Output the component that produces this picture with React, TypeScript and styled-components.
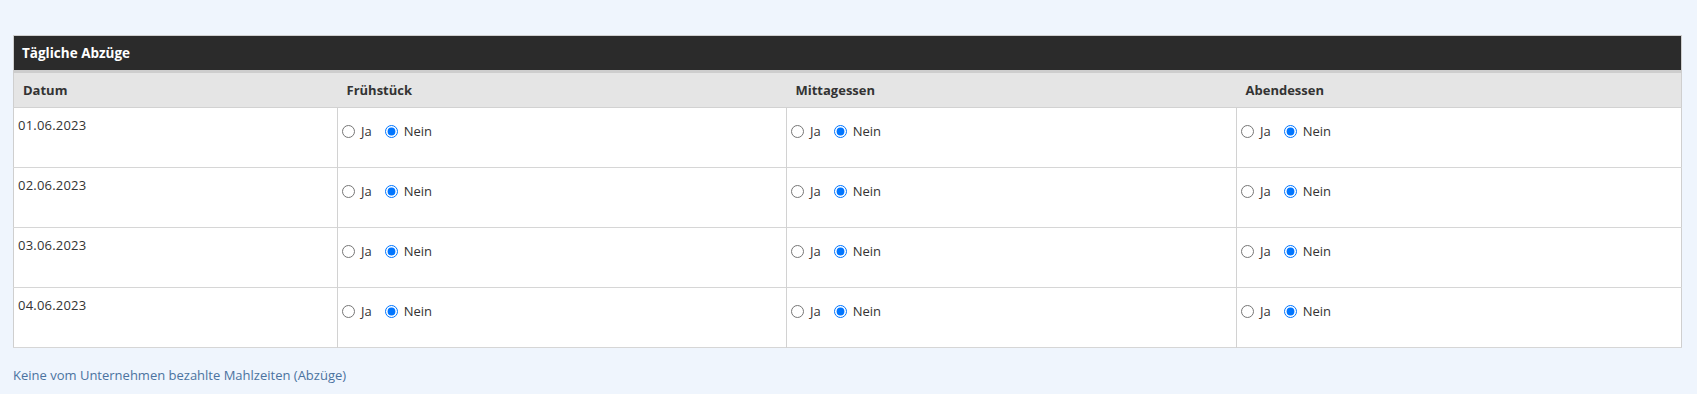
import React from 'react';
import styled, { createGlobalStyle } from 'styled-components';

const GlobalStyle = createGlobalStyle`
  html, body {
    margin: 0;
    padding: 0;
    background: #eff5fd;
    font-family: 'Open Sans', 'Liberation Sans', sans-serif;
    font-size: 13px;
    color: #333;
  }
`;

const Page = styled.div`
  padding: 35px 15px 0 13px;
`;

const Table = styled.table`
  width: 100%;
  border-collapse: collapse;
  table-layout: fixed;
  background: #fff;
  border: 1px solid #cfcfcf;
`;

const Column = styled.col<{ $width?: number }>`
  width: ${(p) => (p.$width ? `${p.$width}px` : 'auto')};
`;

const TitleCell = styled.th`
  background: #2b2b2b;
  color: #fff;
  font-weight: 700;
  font-size: 13.5px;
  line-height: 18px;
  text-align: left;
  padding: 8px 8px;
  border-bottom: 3px solid #cdcdcd;
`;

const HeadCell = styled.th`
  background: #e5e5e5;
  color: #333;
  font-weight: 700;
  line-height: 18px;
  text-align: left;
  padding: 8px 9px;
  border-bottom: 1px solid #d2d2d2;
`;

const Row = styled.tr`
  height: 60px;
  border-bottom: 1px solid #d6d6d6;
`;

const DateCell = styled.td`
  vertical-align: top;
  padding: 8px 4px;
  line-height: 18px;
  letter-spacing: 0.2px;
  border-right: 1px solid #d2d2d2;
`;

const ChoiceCell = styled.td`
  vertical-align: top;
  padding: 14px 4px 0;
  border-right: 1px solid #d2d2d2;
  &:last-child {
    border-right: none;
  }
`;

const Options = styled.div`
  display: flex;
  align-items: center;
  line-height: 18px;
`;

const Option = styled.label`
  display: inline-flex;
  align-items: center;
  gap: 6px;
  margin-right: 13px;
  color: #333;
`;

const Radio = styled.input`
  width: 13px;
  height: 13px;
  margin: 0;
`;

const Footer = styled.div`
  margin-top: 18px;
  color: #4b73a0;
  line-height: 18px;
`;

const days = ['01.06.2023', '02.06.2023', '03.06.2023', '04.06.2023'];
const meals = ['breakfast', 'lunch', 'dinner'];

function Choice(props: { name: string }) {
  return (
    <ChoiceCell>
      <Options>
        <Option>
          <Radio type="radio" name={props.name} value="ja" />
          Ja
        </Option>
        <Option>
          <Radio type="radio" name={props.name} value="nein" defaultChecked />
          Nein
        </Option>
      </Options>
    </ChoiceCell>
  );
}

export default function App() {
  return (
    <Page>
      <GlobalStyle />
      <Table>
        <colgroup>
          <Column $width={324} />
          <Column $width={449} />
          <Column $width={450} />
          <Column />
        </colgroup>
        <thead>
          <tr>
            <TitleCell colSpan={4}>Tägliche Abzüge</TitleCell>
          </tr>
          <tr>
            <HeadCell>Datum</HeadCell>
            <HeadCell>Frühstück</HeadCell>
            <HeadCell>Mittagessen</HeadCell>
            <HeadCell>Abendessen</HeadCell>
          </tr>
        </thead>
        <tbody>
          {days.map((day) => (
            <Row key={day}>
              <DateCell>{day}</DateCell>
              {meals.map((meal) => (
                <Choice key={meal} name={`${day}-${meal}`} />
              ))}
            </Row>
          ))}
        </tbody>
      </Table>
      <Footer>Keine vom Unternehmen bezahlte Mahlzeiten (Abzüge)</Footer>
    </Page>
  );
}
